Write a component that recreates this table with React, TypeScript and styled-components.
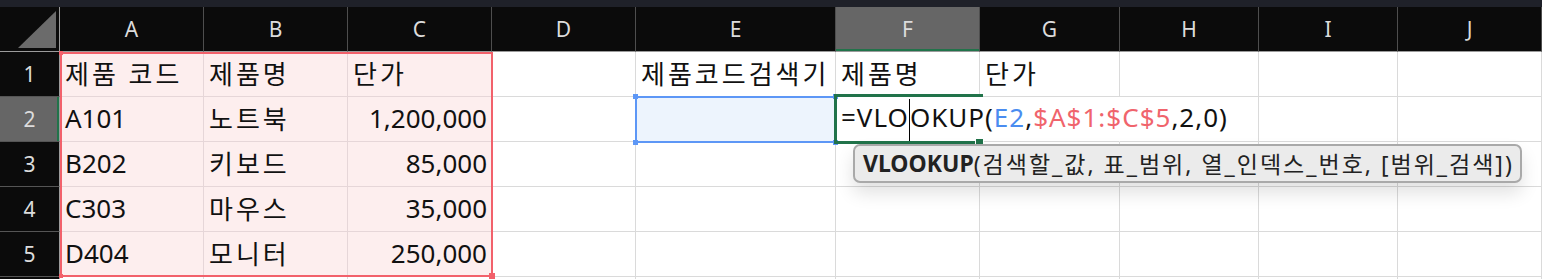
import React from 'react'
import styled, { createGlobalStyle } from 'styled-components'

const GlobalStyle = createGlobalStyle`
  body {
    margin: 0;
    background: #ffffff;
    font-family: 'Noto Sans', 'Noto Sans CJK KR', sans-serif;
  }
`

const Page = styled.div`
  width: 1542px;
  height: 279px;
  overflow: hidden;
  display: flex;
  flex-direction: column;
`

const TopStrip = styled.div`
  height: 7px;
  flex: none;
  background: #1f2129;
`

const Sheet = styled.div`
  display: grid;
  grid-template-columns: 60px 144px 144px 144px 144px 200px 144px 140px 139px 139px 1fr;
  grid-template-rows: repeat(7, 45px);
`

const Corner = styled.div`
  grid-row: 1;
  grid-column: 1;
  background: #0b0b0b;
  border-right: 1px solid #9b9b9b;
  border-bottom: 1px solid #9b9b9b;
  display: flex;
  align-items: flex-end;
  justify-content: flex-end;
  padding: 0 3px 3px 0;
`

const ColHead = styled.div<{ $col: number; $active?: boolean }>`
  grid-row: 1;
  grid-column: ${(p) => p.$col};
  background: ${(p) => (p.$active ? '#666666' : '#0b0b0b')};
  box-shadow: ${(p) => (p.$active ? 'inset 0 -2px 0 #21734a' : 'none')};
  border-right: 1px solid #4e4e4e;
  border-bottom: 1px solid #9b9b9b;
  color: #dcdcdc;
  font-size: 21px;
  display: flex;
  align-items: center;
  justify-content: center;
`

const RowHead = styled.div<{ $row: number; $active?: boolean }>`
  grid-row: ${(p) => p.$row};
  grid-column: 1;
  background: ${(p) => (p.$active ? '#666666' : '#0b0b0b')};
  box-shadow: ${(p) => (p.$active ? 'inset -2px 0 0 #21734a' : 'none')};
  border-right: 1px solid #9b9b9b;
  border-bottom: 1px solid #555555;
  color: #dcdcdc;
  font-size: 21px;
  display: flex;
  align-items: center;
  justify-content: center;
`

const Cell = styled.div<{ $row: number; $col: number; $fill?: string; $line?: string; $right?: boolean; $open?: boolean }>`
  grid-row: ${(p) => p.$row};
  grid-column: ${(p) => p.$col};
  background: ${(p) => p.$fill || 'transparent'};
  border-right: 1px solid ${(p) => (p.$open ? 'transparent' : p.$line || '#dadada')};
  border-bottom: 1px solid ${(p) => p.$line || '#dadada'};
  display: flex;
  align-items: center;
  justify-content: ${(p) => (p.$right ? 'flex-end' : 'flex-start')};
  padding: 0 4px 2px 5px;
  font-size: 26px;
  color: #111111;
  white-space: nowrap;
  overflow: visible;
  min-width: 0;
`

const Hangul = styled.span`
  font-size: 26px;
  letter-spacing: 3px;
`

const RangeBox = styled.div`
  grid-row: 2 / 7;
  grid-column: 2 / 5;
  border: 2px solid #f2616b;
  margin: 0 -1px 0 0;
  position: relative;
  pointer-events: none;
  z-index: 2;
`

const Handle = styled.span<{ $color: string; $size: number }>`
  position: absolute;
  width: ${(p) => p.$size}px;
  height: ${(p) => p.$size}px;
  background: ${(p) => p.$color};
`

const SearchBox = styled.div`
  grid-row: 3;
  grid-column: 6;
  margin: -1px 0 -1px -1px;
  border: 2px solid #5d97f6;
  position: relative;
  pointer-events: none;
  z-index: 2;
`

const ActiveBox = styled.div`
  grid-row: 3;
  grid-column: 7;
  margin: -3px -3px -2px -2px;
  border: 3px solid #21734a;
  border-right: none;
  position: relative;
  pointer-events: none;
  z-index: 2;
`

const Formula = styled.span`
  font-size: 26px;
  letter-spacing: 1px;
  color: #111111;
`

const Ref = styled.span<{ $color: string }>`
  color: ${(p) => p.$color};
`

const Caret = styled.span`
  display: inline-block;
  width: 1px;
  height: 42px;
  background: #000000;
  vertical-align: middle;
  margin: -6px 0 -4px;
`

const Tip = styled.div`
  grid-row: 4;
  grid-column: 7 / 12;
  align-self: start;
  margin: 2px 20px 0 17px;
  height: 39px;
  box-sizing: border-box;
  background: #ebebeb;
  border: 2px solid #a9a9a9;
  border-radius: 7px;
  box-shadow: 0 10px 18px rgba(0, 0, 0, 0.12);
  display: flex;
  align-items: center;
  padding: 0 0 2px 8px;
  font-size: 23px;
  color: #222222;
  white-space: nowrap;
  z-index: 3;
`

const TipName = styled.b`
  font-weight: 700;
`

const TipArgs = styled.span`
  letter-spacing: 2px;
`

const COLS = ['A', 'B', 'C', 'D', 'E', 'F', 'G', 'H', 'I', 'J']

type CellData = { text: string; right?: boolean; kr?: boolean }

const rows: Record<number, Record<number, CellData>> = {
  1: {
    1: { text: '제품 코드', kr: true },
    2: { text: '제품명', kr: true },
    3: { text: '단가', kr: true },
    5: { text: '제품코드검색기', kr: true },
    6: { text: '제품명', kr: true },
    7: { text: '단가', kr: true },
  },
  2: { 1: { text: 'A101' }, 2: { text: '노트북', kr: true }, 3: { text: '1,200,000', right: true } },
  3: { 1: { text: 'B202' }, 2: { text: '키보드', kr: true }, 3: { text: '85,000', right: true } },
  4: { 1: { text: 'C303' }, 2: { text: '마우스', kr: true }, 3: { text: '35,000', right: true } },
  5: { 1: { text: 'D404' }, 2: { text: '모니터', kr: true }, 3: { text: '250,000', right: true } },
  6: {},
}

const cornerHandles = (color: string, size: number) => {
  const off = -Math.ceil(size / 2) - 1
  return [
    { top: off, left: off },
    { top: off, right: off },
    { bottom: off, left: off },
    { bottom: off, right: off },
  ].map((pos, i) => <Handle key={i} $color={color} $size={size} style={pos} />)
}

const App = () => {
  return (
    <Page>
      <GlobalStyle />
      <TopStrip />
      <Sheet>
        <Corner>
          <svg width="38" height="37" viewBox="0 0 38 37">
            <polygon points="0,37 38,37 38,0" fill="#6b6b6b" />
          </svg>
        </Corner>
        {COLS.map((c, i) => (
          <ColHead key={c} $col={i + 2} $active={c === 'F'}>
            {c}
          </ColHead>
        ))}
        {Object.keys(rows).map((r) => {
          const row = Number(r)
          return (
            <React.Fragment key={r}>
              <RowHead $row={row + 1} $active={row === 2}>
                {row <= 5 ? row : ''}
              </RowHead>
              {COLS.map((c, i) => {
                const col = i + 1
                const data = rows[row][col]
                const pink = col <= 3 && row <= 5
                const isFormula = row === 2 && col === 6
                return (
                  <Cell
                    key={c}
                    $row={row + 1}
                    $col={col + 1}
                    $fill={pink ? '#fdeeee' : row === 2 && col === 5 ? '#edf4fd' : undefined}
                    $line={pink ? '#e6d6d8' : undefined}
                    $right={data?.right}
                    $open={row === 2 && (col === 6 || col === 7)}
                  >
                    {isFormula ? (
                      <Formula>
                        =VLO
                        <Caret />
                        OKUP(<Ref $color="#4a8cf0">E2</Ref>,<Ref $color="#f0646c">$A$1:$C$5</Ref>,2,0)
                      </Formula>
                    ) : data?.kr ? (
                      <Hangul>{data.text}</Hangul>
                    ) : (
                      data?.text
                    )}
                  </Cell>
                )
              })}
            </React.Fragment>
          )
        })}
        <RangeBox>
          <Handle $color="#f2616b" $size={4} style={{ top: -3, left: -3 }} />
          <Handle $color="#f2616b" $size={6} style={{ bottom: -4, right: -4 }} />
          <Handle $color="#f2616b" $size={4} style={{ bottom: -3, left: -3 }} />
        </RangeBox>
        <SearchBox>{cornerHandles('#5d97f6', 5)}</SearchBox>
        <ActiveBox>
          <Handle $color="#21734a" $size={7} style={{ bottom: -5, right: 0, outline: '1px solid #fff' }} />
        </ActiveBox>
        <Tip>
          <TipName>VLOOKUP</TipName>
          <TipArgs>(검색할_값, 표_범위, 열_인덱스_번호, [범위_검색])</TipArgs>
        </Tip>
      </Sheet>
    </Page>
  )
}

export default App
